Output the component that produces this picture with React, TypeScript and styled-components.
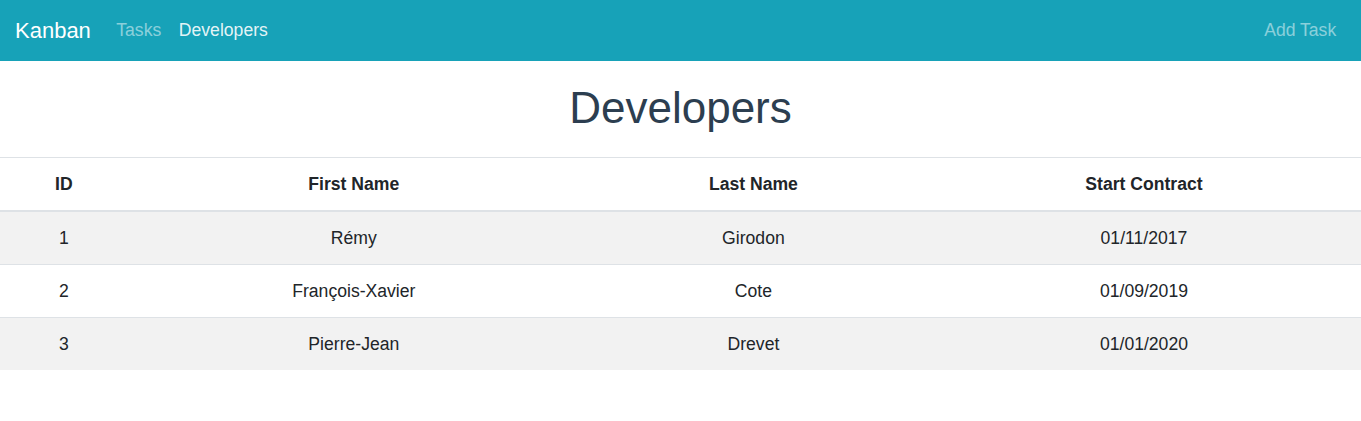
import React from "react";
import styled, { createGlobalStyle } from "styled-components";

const GlobalStyle = createGlobalStyle`
  html {
    font-size: 17.6px;
  }
  html, body {
    margin: 0;
    padding: 0;
    background: #ffffff;
  }
  body {
    font-family: "Liberation Sans", Arial, sans-serif;
    font-size: 1rem;
    line-height: 1.5;
    color: #212529;
  }
  * { box-sizing: border-box; }
`;

const NavBar = styled.nav`
  height: 61px;
  background: #17a2b8;
  display: flex;
  align-items: center;
  padding: 0 16px 1px 15px;
`;

const Brand = styled.a`
  font-size: 22px;
  line-height: 33px;
  color: #ffffff;
  text-decoration: none;
  margin-right: 16.6px;
  white-space: nowrap;
`;

const NavList = styled.div<{ $right?: boolean }>`
  display: flex;
  align-items: center;
  margin-left: ${(p) => (p.$right ? "auto" : "0")};
`;

const NavLink = styled.a<{ $active?: boolean }>`
  font-size: 17.6px;
  line-height: 26px;
  padding: 0 8.8px;
  text-decoration: none;
  color: ${(p) => (p.$active ? "rgba(255,255,255,0.9)" : "rgba(255,255,255,0.5)")};
  white-space: nowrap;
`;

const Main = styled.main`
  padding-top: 21px;
  text-align: center;
`;

const Title = styled.h1`
  margin: 0 0 22px 0;
  font-size: 44px;
  font-weight: 400;
  line-height: 1.2;
  color: #2c3e50;
`;

const Table = styled.table`
  width: 100%;
  border-collapse: collapse;
  color: #212529;
`;

const HeadCell = styled.th`
  padding: 12px;
  line-height: 28px;
  font-weight: 700;
  text-align: center;
  border-top: 1px solid #dee2e6;
  border-bottom: 2px solid #dee2e6;
`;

const Row = styled.tr<{ $striped?: boolean }>`
  background: ${(p) => (p.$striped ? "#f2f2f2" : "transparent")};
`;

const Cell = styled.td`
  padding: 12px;
  line-height: 28px;
  text-align: center;
  border-top: 1px solid #dee2e6;
`;

const developers = [
  { id: 1, firstName: "Rémy", lastName: "Girodon", start: "01/11/2017" },
  { id: 2, firstName: "François-Xavier", lastName: "Cote", start: "01/09/2019" },
  { id: 3, firstName: "Pierre-Jean", lastName: "Drevet", start: "01/01/2020" },
];

export default function App() {
  return (
    <>
      <GlobalStyle />
      <NavBar>
        <Brand href="#">Kanban</Brand>
        <NavList>
          <NavLink href="#">Tasks</NavLink>
          <NavLink href="#" $active>
            Developers
          </NavLink>
        </NavList>
        <NavList $right>
          <NavLink href="#">Add Task</NavLink>
        </NavList>
      </NavBar>
      <Main>
        <Title>Developers</Title>
        <Table>
          <thead>
            <tr>
              <HeadCell>ID</HeadCell>
              <HeadCell>First Name</HeadCell>
              <HeadCell>Last Name</HeadCell>
              <HeadCell>Start Contract</HeadCell>
            </tr>
          </thead>
          <tbody>
            {developers.map((d, i) => (
              <Row key={d.id} $striped={i % 2 === 0}>
                <Cell>{d.id}</Cell>
                <Cell>{d.firstName}</Cell>
                <Cell>{d.lastName}</Cell>
                <Cell>{d.start}</Cell>
              </Row>
            ))}
          </tbody>
        </Table>
      </Main>
    </>
  );
}
